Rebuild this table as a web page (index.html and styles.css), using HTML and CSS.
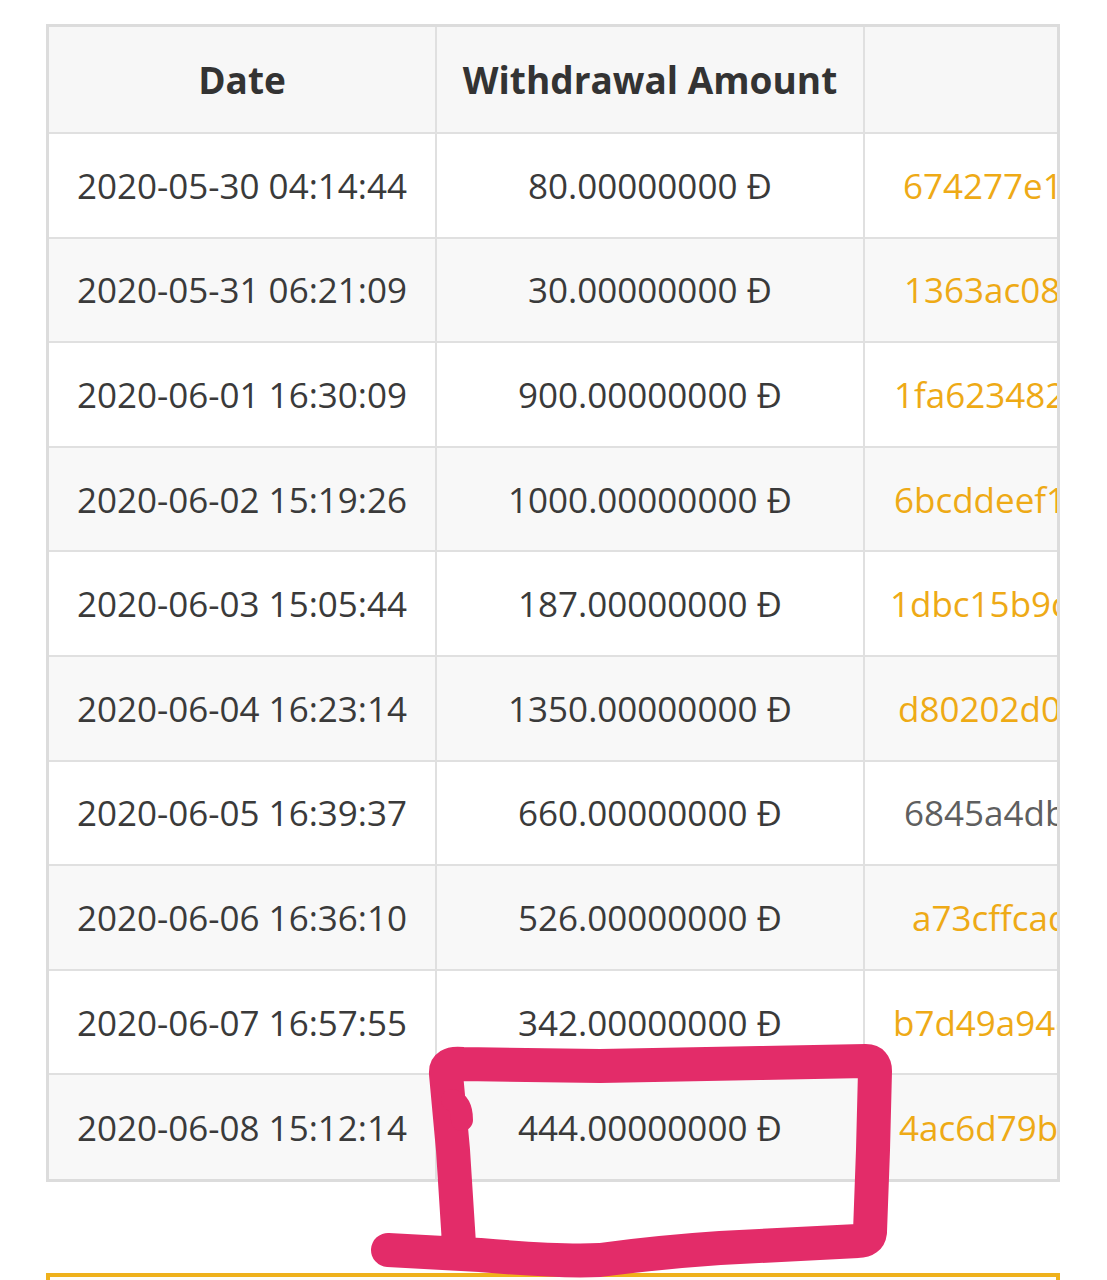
FILE: index.html
```html
<!DOCTYPE html>
<html lang="en">
<head>
<meta charset="utf-8">
<title>Withdrawals</title>
<link rel="stylesheet" href="styles.css">
</head>
<body>
<main class="page">
  <div class="table-wrap">
    <table class="withdrawals">
      <colgroup>
        <col class="col-date">
        <col class="col-amount">
        <col class="col-tx">
      </colgroup>
      <thead>
        <tr>
          <th>Date</th>
          <th>Withdrawal Amount</th>
          <th></th>
        </tr>
      </thead>
      <tbody>
        <tr><td>2020-05-30 04:14:44</td><td>80.00000000 Đ</td><td class="tx link" style="--off:38px">674277e1a9c03f5b</td></tr>
        <tr><td>2020-05-31 06:21:09</td><td>30.00000000 Đ</td><td class="tx link" style="--off:39px">1363ac08f2d4b7e1</td></tr>
        <tr><td>2020-06-01 16:30:09</td><td>900.00000000 Đ</td><td class="tx link" style="--off:29px">1fa62348209d1c7e</td></tr>
        <tr><td>2020-06-02 15:19:26</td><td>1000.00000000 Đ</td><td class="tx link" style="--off:29px">6bcddeef1a017c54</td></tr>
        <tr><td>2020-06-03 15:05:44</td><td>187.00000000 Đ</td><td class="tx link" style="--off:25px">1dbc15b9ce42a0d3</td></tr>
        <tr><td>2020-06-04 16:23:14</td><td>1350.00000000 Đ</td><td class="tx link" style="--off:33px">d80202d0c5e91b7a</td></tr>
        <tr><td>2020-06-05 16:39:37</td><td>660.00000000 Đ</td><td class="tx plain" style="--off:39px">6845a4dbe07f23c9</td></tr>
        <tr><td>2020-06-06 16:36:10</td><td>526.00000000 Đ</td><td class="tx link" style="--off:47px">a73cffcad8154e60</td></tr>
        <tr><td>2020-06-07 16:57:55</td><td>342.00000000 Đ</td><td class="tx link" style="--off:28px">b7d49a94e16c3f08</td></tr>
        <tr><td>2020-06-08 15:12:14</td><td>444.00000000 Đ</td><td class="tx link" style="--off:34px">4ac6d79bf208e5a1</td></tr>
      </tbody>
    </table>
  </div>
  <div class="next-box"></div>
</main>
<svg class="markup" width="1107" height="1280" viewBox="0 0 1107 1280" aria-hidden="true">
  <path d="M459 1244 L453 1150 L446 1074 Q445 1062 462 1064 L600 1066 L760 1063 L866 1061 Q875 1061 875 1071 L873 1150 L870 1232 Q869 1241 858 1241 L720 1248 Q660 1252 600 1260 Q560 1262 480 1255 L388 1250"/>
  <path class="hook" d="M452 1100 Q462 1104 462 1120"/>
</svg>
</body>
</html>
```

FILE: styles.css
```css
html, body {
  margin: 0;
  padding: 0;
  background: #ffffff;
}

body {
  font-family: "Open Sans", "Noto Sans", "Liberation Sans", sans-serif;
  color: #333333;
  width: 1107px;
  height: 1280px;
  overflow: hidden;
  position: relative;
}

.page {
  padding: 24px 47px 0 46px;
  display: flex;
  flex-direction: column;
}

.table-wrap {
  width: 1014px;
  box-sizing: border-box;
  border: 3px solid #dcdcdc;
  overflow: hidden;
}

.withdrawals {
  border-collapse: collapse;
  border-style: hidden;
  table-layout: fixed;
  width: 1600px;
  font-size: 35px;
}

.col-date { width: 387px; }
.col-amount { width: 428px; }
.col-tx { width: 785px; }

.withdrawals th,
.withdrawals td {
  border: 2px solid #e0e0e0;
  text-align: center;
  vertical-align: middle;
  padding: 0;
  white-space: nowrap;
}

.withdrawals thead tr {
  height: 106px;
  background: #f7f7f7;
}

.withdrawals th {
  font-weight: 700;
  font-size: 37px;
  color: #333333;
}

.withdrawals tbody tr {
  height: 104.6px;
  background: #ffffff;
}

.withdrawals tbody tr:nth-child(even) {
  background: #f8f8f8;
}

.withdrawals td {
  color: #3a3a3a;
}

.withdrawals td.tx {
  text-align: left;
  padding-left: var(--off);
}

.tx.link { color: #eeaa16; }
.tx.plain { color: #5f5f5f; }

.next-box {
  margin-top: 91px;
  width: 1014px;
  height: 40px;
  box-sizing: border-box;
  border: 4px solid #efb11b;
  border-bottom: none;
  background: #fffdf8;
}

.markup {
  position: absolute;
  left: 0;
  top: 0;
  pointer-events: none;
}

.markup path {
  fill: none;
  stroke: #e32c69;
  stroke-width: 34;
  stroke-linecap: round;
  stroke-linejoin: round;
}

.markup path.hook {
  stroke-width: 22;
}
```
